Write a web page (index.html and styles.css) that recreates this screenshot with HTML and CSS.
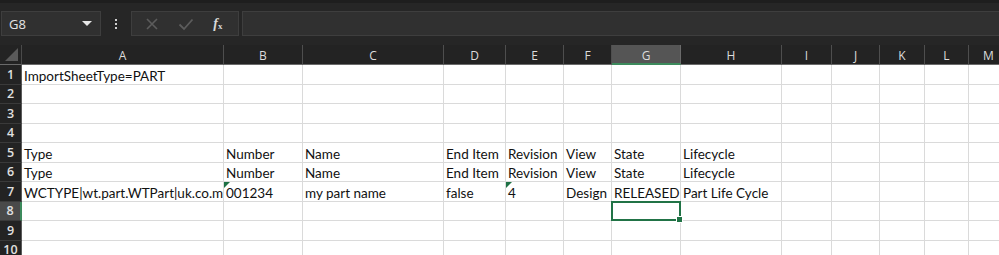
FILE: index.html
```html
<!DOCTYPE html>
<html lang="en">
  <head>
    <meta charset="UTF-8" />
    <title>Book1 - Excel</title>
    <link rel="stylesheet" href="styles.css">
  </head>
  <body>
    <div class="toolbar">
      <div class="name-box">
        <span>G8</span>
        <span class="caret"></span>
      </div>
      <div class="dots">
        <span></span><span></span><span></span>
      </div>
      <div class="fx-box">
        <svg class="icon" width="14" height="14" viewBox="0 0 14 14">
          <path d="M2 2 L12 12 M12 2 L2 12" stroke="#5c5c5c" stroke-width="1.6" fill="none" />
        </svg>
        <svg class="icon" width="16" height="14" viewBox="0 0 16 14">
          <path d="M1.5 7.5 L6 12 L14.5 2.5" stroke="#5c5c5c" stroke-width="1.8" fill="none" />
        </svg>
        <span class="fx"><i>f</i><sub>x</sub></span>
      </div>
      <div class="formula"></div>
    </div>

    <div class="sheet">
      <div class="corner"><span class="corner-tri"></span></div>
      <div class="col-head">A</div>
      <div class="col-head">B</div>
      <div class="col-head">C</div>
      <div class="col-head">D</div>
      <div class="col-head">E</div>
      <div class="col-head">F</div>
      <div class="col-head active">G</div>
      <div class="col-head">H</div>
      <div class="col-head">I</div>
      <div class="col-head">J</div>
      <div class="col-head">K</div>
      <div class="col-head">L</div>
      <div class="col-head">M</div>
    </div>
    <script>
      // fill the grid rows from data
      const rows = [
        ["ImportSheetType=PART"],
        [],
        [],
        [],
        ["Type", "Number", "Name", "End Item", "Revision", "View", "State", "Lifecycle"],
        ["Type", "Number", "Name", "End Item", "Revision", "View", "State", "Lifecycle"],
        ["WCTYPE|wt.part.WTPart|uk.co.mycompany.Part", "001234", "my part name", "false", "4", "Design", "RELEASED", "Part Life Cycle"],
        [],
        [],
        []
      ];
      const flagged = { "7-1": true, "7-4": true };
      const sheet = document.querySelector(".sheet");

      rows.forEach((row, r) => {
        const n = r + 1;
        const head = document.createElement("div");
        head.className = "row-head" + (n === 8 ? " active" : "");
        head.textContent = n;
        sheet.appendChild(head);

        for (let c = 0; c < 13; c++) {
          const cell = document.createElement("div");
          cell.className = "cell";
          if (row[c]) {
            const span = document.createElement("span");
            span.textContent = row[c];
            cell.appendChild(span);
          }
          if (flagged[n + "-" + c]) cell.classList.add("flag");
          if (n === 8 && c === 6) cell.classList.add("selected");
          sheet.appendChild(cell);
        }
      });
    </script>
  </body>
</html>
```

FILE: styles.css
```css
* {
  margin: 0;
  padding: 0;
  box-sizing: border-box;
}

body {
  background-color: #262626;
  width: 999px;
  height: 255px;
  overflow: hidden;
  font-family: "Open Sans", "Noto Sans", sans-serif;
}

.toolbar {
  display: flex;
  align-items: center;
  height: 45px;
  padding: 8px 0 9px 1px;
  border-top: 3px solid #1e1e1e;
}

.name-box {
  display: flex;
  align-items: center;
  justify-content: space-between;
  width: 100px;
  height: 25px;
  padding: 0 8px 0 7px;
  background-color: #303030;
  border: 1px solid #3e3e3e;
  color: #e6e6e6;
  font-size: 13px;
}

.caret {
  width: 0;
  height: 0;
  border-left: 5px solid transparent;
  border-right: 5px solid transparent;
  border-top: 5px solid #e6e6e6;
}

.dots {
  display: flex;
  flex-direction: column;
  align-items: center;
  gap: 2px;
  width: 30px;
}

.dots span {
  width: 2px;
  height: 2px;
  background-color: #d0d0d0;
}

.fx-box {
  display: flex;
  align-items: center;
  justify-content: space-around;
  width: 108px;
  height: 25px;
  padding: 0 6px 0 4px;
  background-color: #303030;
  border: 1px solid #3e3e3e;
}

.fx {
  color: #d8d8d8;
  font-family: "Liberation Serif", serif;
  font-size: 14px;
  font-weight: bold;
  line-height: 1;
}

.fx sub {
  font-size: 9px;
  vertical-align: -1px;
}

.formula {
  flex: 1;
  height: 25px;
  margin-left: 3px;
  background-color: #303030;
  border: 1px solid #3e3e3e;
  border-right: none;
}

.sheet {
  display: grid;
  grid-template-columns: 22px 202px 79px 141px 62px 58px 48px 69px 101px 50px 48px 45px 44px 40px;
  grid-template-rows: 20px repeat(10, 19.5px);
}

.corner {
  position: relative;
  background-color: #232323;
  border-right: 1px solid #4a4a4a;
  border-bottom: 1px solid #6a6a6a;
}

.corner-tri {
  position: absolute;
  right: 3px;
  bottom: 3px;
  width: 0;
  height: 0;
  border-left: 13px solid transparent;
  border-bottom: 13px solid #5a5a5a;
}

.col-head {
  display: flex;
  align-items: center;
  justify-content: center;
  background-color: #232323;
  border-right: 1px solid #4e4e4e;
  border-bottom: 1px solid #6a6a6a;
  color: #dcdcdc;
  font-size: 12px;
  padding-top: 2px;
}

.col-head.active {
  background-color: #555555;
  border-right-color: #6a6a6a;
  border-bottom: 2px solid #3c8a5c;
}

.row-head {
  display: flex;
  align-items: center;
  justify-content: center;
  background-color: #232323;
  border-right: 1px solid #5a5a5a;
  border-bottom: 1px solid #3a3a3a;
  color: #e0e0e0;
  font-size: 12.5px;
  font-weight: 600;
}

.row-head.active {
  background-color: #4a4a4a;
  border-right: 2px solid #3c8a5c;
}

.cell {
  position: relative;
  display: flex;
  align-items: flex-end;
  overflow: hidden;
  white-space: nowrap;
  padding: 0 0 0 2px;
  background-color: #ffffff;
  border-right: 1px solid #dadada;
  border-bottom: 1px solid #dadada;
  color: #111111;
  font-family: "Lato", "Open Sans", sans-serif;
  font-size: 13.5px;
  line-height: 16px;
}

.cell.flag::before {
  content: "";
  position: absolute;
  top: 0;
  left: 0;
  width: 0;
  height: 0;
  border-top: 6px solid #1e7145;
  border-right: 6px solid transparent;
}

.cell.selected {
  overflow: visible;
}

.cell.selected::after {
  content: "";
  position: absolute;
  top: -1px;
  left: -1px;
  right: -1px;
  bottom: -1px;
  border: 2px solid #217346;
}

.cell.selected::before {
  content: "";
  position: absolute;
  right: -3px;
  bottom: -3px;
  width: 5px;
  height: 5px;
  background-color: #217346;
  border: 1px solid #ffffff;
  z-index: 1;
}
```
